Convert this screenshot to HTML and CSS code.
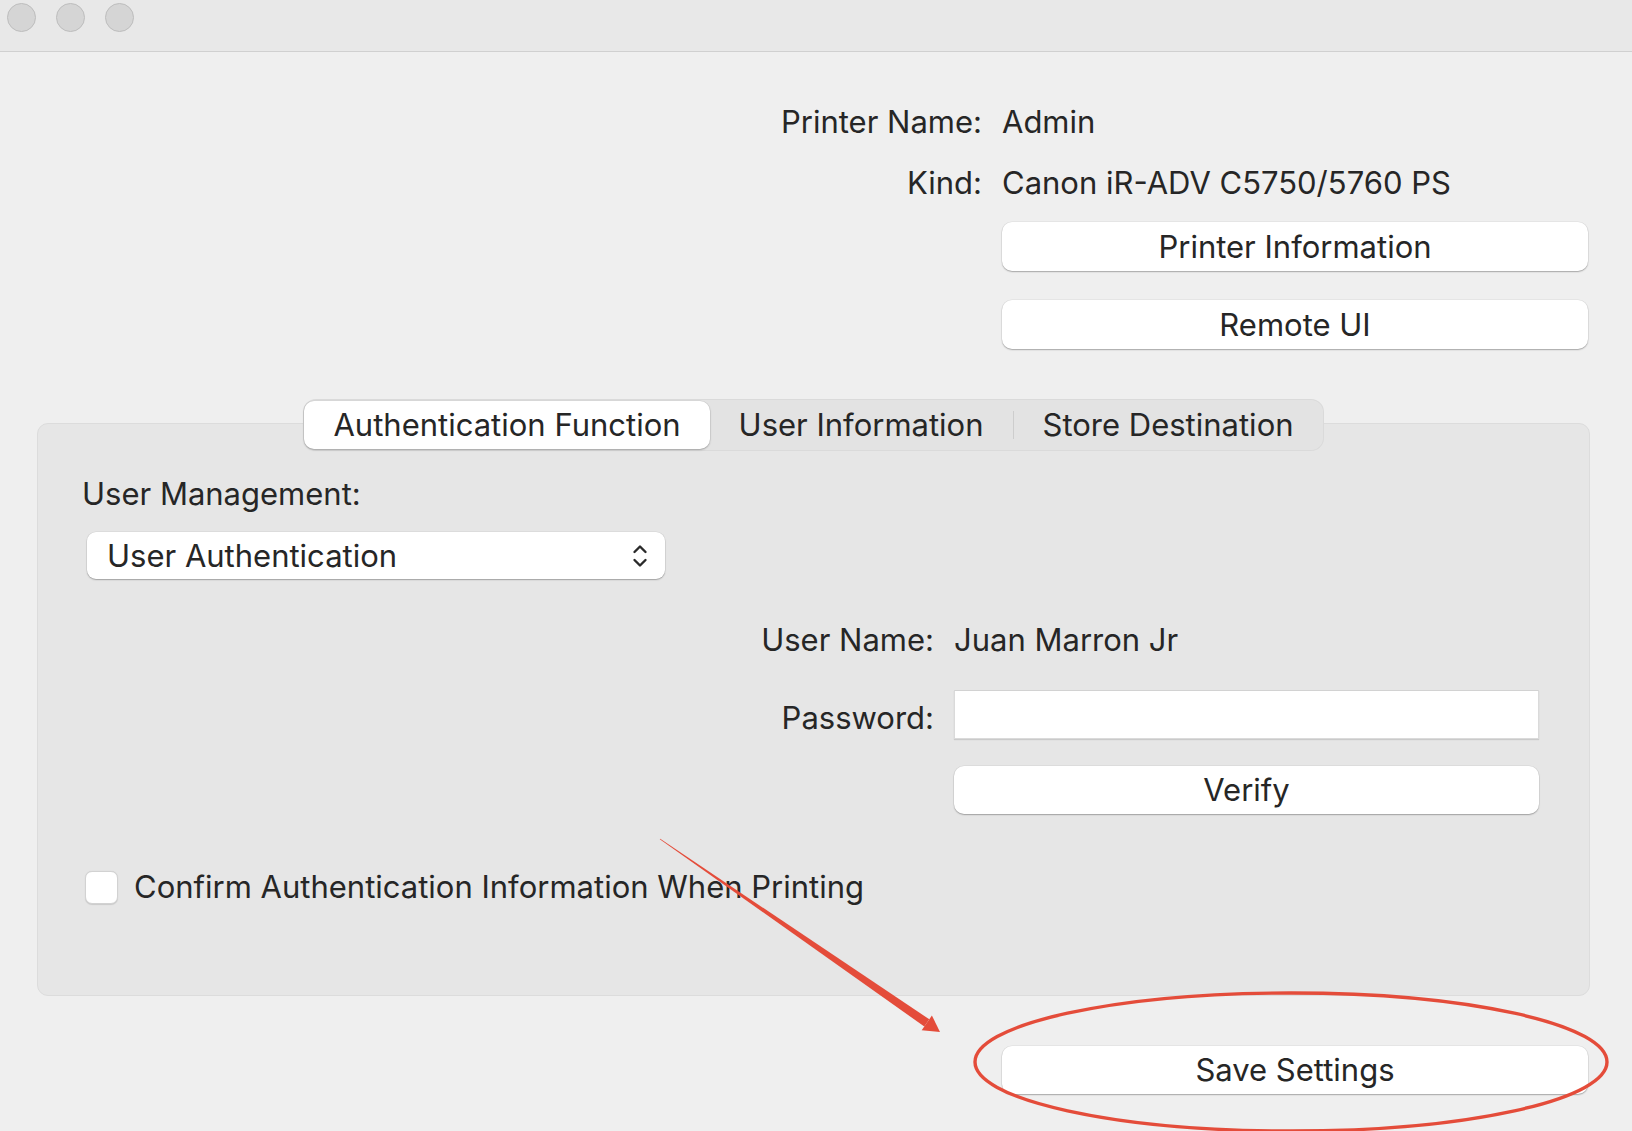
FILE: index.html
```html
<!DOCTYPE html>
<html lang="en">
<head>
<meta charset="utf-8">
<title>Printer Settings</title>
<link rel="stylesheet" href="styles.css">
</head>
<body>
<div class="window">
  <header class="titlebar">
    <span class="light"></span>
    <span class="light"></span>
    <span class="light"></span>
  </header>
  <main class="content">
    <section class="info">
      <div class="label">Printer Name:</div>
      <div class="value">Admin</div>
      <div class="label row2">Kind:</div>
      <div class="value row2">Canon iR-ADV C5750/5760 PS</div>
      <button class="btn info-btn first">Printer Information</button>
      <button class="btn info-btn second">Remote UI</button>
    </section>

    <nav class="tabs">
      <div class="seg">
        <span class="tab active">Authentication Function</span>
        <span class="tab">User Information</span>
        <span class="sep"></span>
        <span class="tab">Store Destination</span>
      </div>
    </nav>

    <section class="panel">
      <div class="section-label">User Management:</div>
      <div class="popup">
        <span class="popup-text">User Authentication</span>
        <svg class="chev" width="16" height="28" viewBox="0 0 16 28" aria-hidden="true">
          <polyline points="2.5,10 8,4.5 13.5,10" fill="none" stroke="#2a2a2a" stroke-width="2.4" stroke-linecap="round" stroke-linejoin="round"/>
          <polyline points="2.5,18 8,23.5 13.5,18" fill="none" stroke="#2a2a2a" stroke-width="2.4" stroke-linecap="round" stroke-linejoin="round"/>
        </svg>
      </div>

      <div class="form">
        <div class="label">User Name:</div>
        <div class="value">Juan Marron Jr</div>
        <div class="label pw">Password:</div>
        <div class="field pw"></div>
        <button class="btn verify">Verify</button>
      </div>

      <label class="check-row">
        <span class="checkbox"></span>
        <span>Confirm Authentication Information When Printing</span>
      </label>
    </section>

    <div class="footer">
      <button class="btn save">Save Settings</button>
    </div>
  </main>

  <svg class="annot" width="1632" height="1131" viewBox="0 0 1632 1131" aria-hidden="true">
    <ellipse cx="1291" cy="1062" rx="316" ry="69" fill="none" stroke="#e44c3a" stroke-width="3.4"/>
    <polygon points="659.8,839.2 660.2,838.8 929.3,1019.3 924.3,1026.5" fill="#e44c3a"/>
    <polygon points="921.7,1030.3 931.9,1015.5 940,1032" fill="#e44c3a"/>
  </svg>
</div>
</body>
</html>
```

FILE: styles.css
```css
* { box-sizing: border-box; }

html, body {
  margin: 0;
  padding: 0;
  background: #efefef;
}

body {
  font-family: "Inter", "Noto Sans", sans-serif;
  font-size: 31px;
  color: #262626;
  overflow: hidden;
}

.window {
  position: relative;
  width: 1632px;
  height: 1131px;
  background: #efefef;
}

.titlebar {
  height: 52px;
  background: #e8e8e8;
  border-bottom: 1px solid #d0d0d0;
  display: flex;
  gap: 20px;
  padding: 3px 0 0 7px;
}

.light {
  width: 29px;
  height: 29px;
  border-radius: 50%;
  background: #d5d5d5;
  border: 1px solid #bdbdbd;
}

.content {
  display: flex;
  flex-direction: column;
}

/* printer info */
.info {
  display: grid;
  grid-template-columns: 1fr 586px;
  column-gap: 20px;
  padding: 52px 44px 0 0;
  line-height: 36px;
}

.label { text-align: right; white-space: nowrap; }
.value { white-space: nowrap; }

.info .row2 { margin-top: 25px; }
.info-btn { grid-column: 2; }
.info-btn.first { margin-top: 21px; }
.info-btn.second { margin-top: 29px; }

.btn {
  display: block;
  width: 586px;
  height: 49px;
  border: 0;
  border-radius: 10px;
  background: #ffffff;
  font: inherit;
  color: inherit;
  line-height: 49px;
  padding: 0;
  text-align: center;
  box-shadow: 0 1px 1.5px rgba(0, 0, 0, 0.28), 0 0 0 0.5px rgba(0, 0, 0, 0.07);
}

/* tabs */
.tabs {
  display: flex;
  justify-content: center;
  margin: 50px 42px -28px 37px;
  position: relative;
  z-index: 1;
}

.seg {
  display: flex;
  align-items: center;
  height: 52px;
  padding: 2px 1px;
  border-radius: 13px;
  background: #e3e3e3;
  box-shadow: inset 0 0 0 1px rgba(0, 0, 0, 0.04);
}

.tab {
  height: 48px;
  line-height: 48px;
  padding: 0 29px;
  white-space: nowrap;
  border-radius: 10px;
}

.tab.active {
  background: #ffffff;
  box-shadow: 0 1px 2px rgba(0, 0, 0, 0.25), 0 0 0 0.5px rgba(0, 0, 0, 0.08);
}

.sep {
  width: 1px;
  height: 28px;
  background: #cdcdcd;
}

/* panel */
.panel {
  margin: 0 42px 0 37px;
  height: 573px;
  background: #e6e6e6;
  border: 1px solid #dcdcdc;
  border-radius: 11px;
  padding: 52px 50px 0 44px;
  line-height: 36px;
}

.popup {
  margin: 20px 0 0 5px;
  width: 578px;
  height: 47px;
  border-radius: 9px;
  background: #ffffff;
  box-shadow: 0 1px 1.5px rgba(0, 0, 0, 0.28), 0 0 0 0.5px rgba(0, 0, 0, 0.07);
  display: flex;
  align-items: center;
  justify-content: space-between;
  padding: 0 17px 0 20px;
  line-height: 47px;
}

.chev { display: block; }

.form {
  display: grid;
  grid-template-columns: 1fr 585px;
  column-gap: 20px;
  margin-top: 43px;
  align-items: center;
}

.form .pw { margin-top: 32px; }
.form .label.pw { padding-top: 6px; }

.field {
  height: 49px;
  background: #ffffff;
  border: 1px solid #dadada;
  border-top-color: #d2d2d2;
  box-shadow: 0 1px 1px rgba(0, 0, 0, 0.12);
}

.verify {
  grid-column: 2;
  width: 585px;
  height: 48px;
  line-height: 48px;
  margin-top: 27px;
}

.check-row {
  display: flex;
  align-items: center;
  gap: 16px;
  margin: 55px 0 0 3px;
}

.checkbox {
  width: 33px;
  height: 33px;
  border-radius: 7px;
  background: #ffffff;
  border: 1px solid #d2d2d2;
  box-shadow: 0 0.5px 1px rgba(0, 0, 0, 0.12);
}

/* footer */
.footer {
  display: flex;
  justify-content: flex-end;
  padding-right: 44px;
  margin-top: 50px;
}

.save {
  height: 48px;
  line-height: 48px;
}

/* annotation overlay */
.annot {
  position: absolute;
  top: 0;
  left: 0;
  pointer-events: none;
}
```
